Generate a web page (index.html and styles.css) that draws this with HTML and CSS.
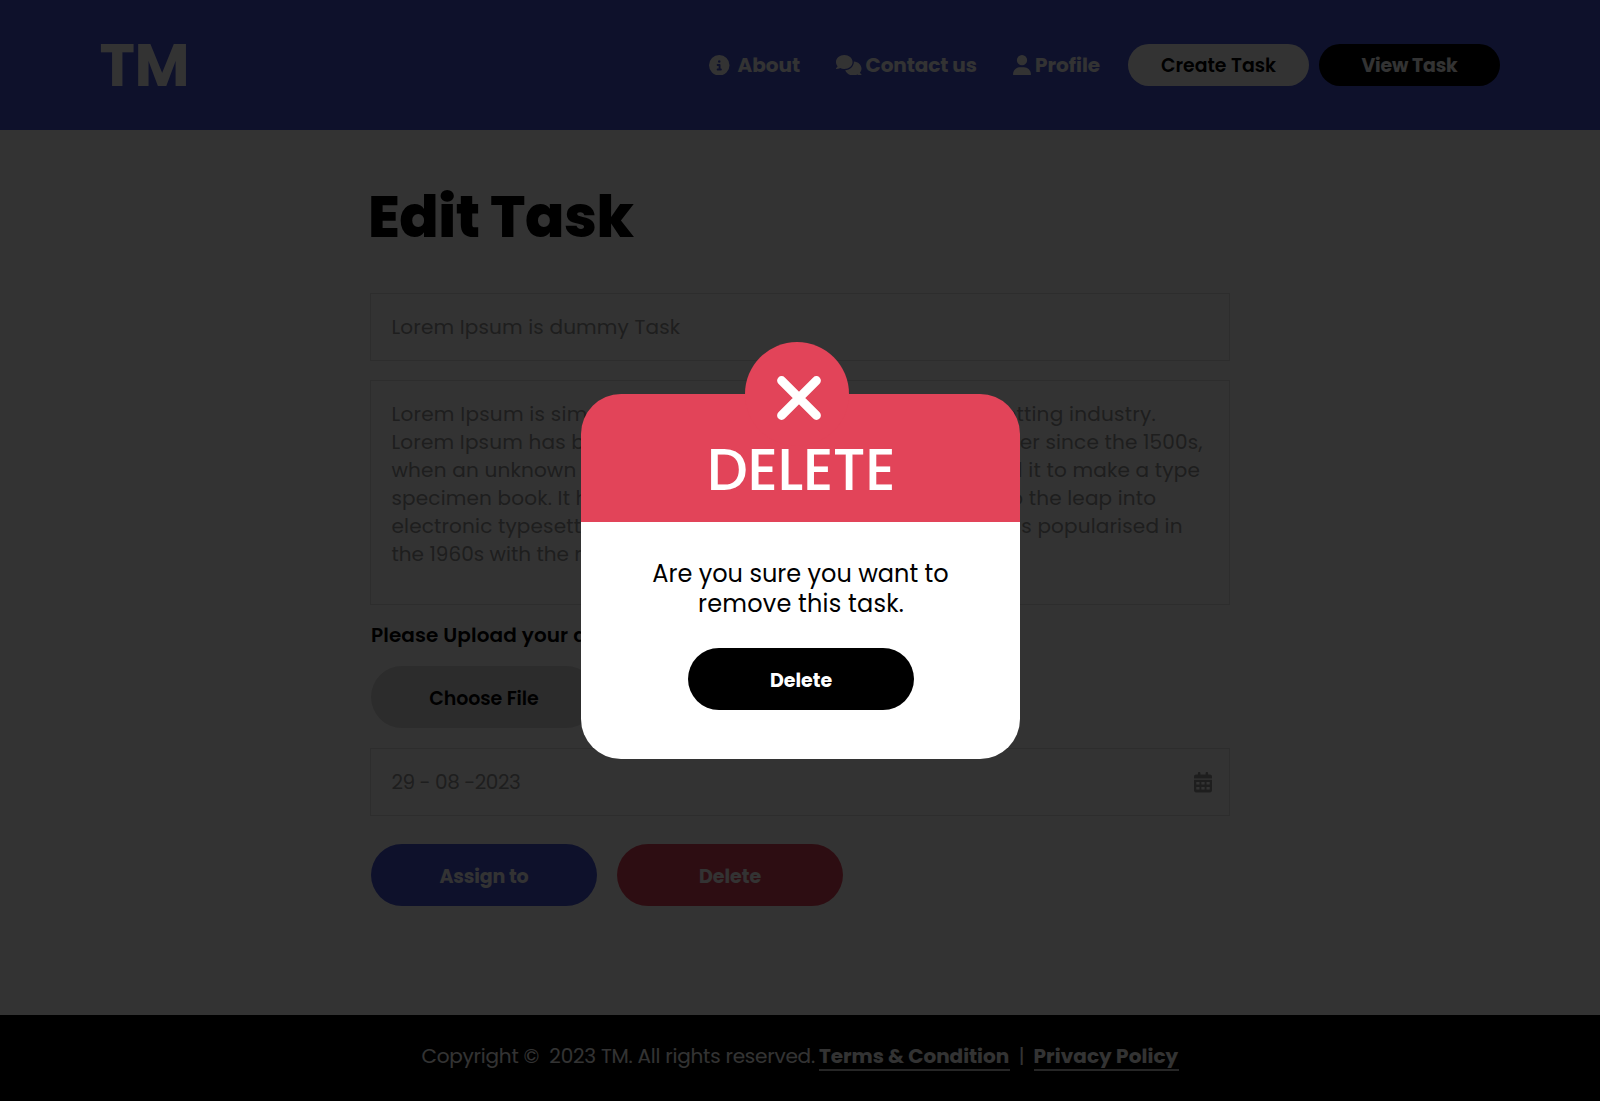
FILE: index.html
```
<!DOCTYPE html>
<html lang="en">
<head>
<meta charset="utf-8">
<title>Edit Task</title>
<link rel="stylesheet" href="styles.css">
</head>
<body>
<header class="topbar">
  <div class="logo">TM</div>
  <nav class="nav">
    <a class="nav-link about">
      <svg class="ico" width="20.5" height="20.5" viewBox="0 0 512 512"><path fill="currentColor" d="M256 512A256 256 0 1 0 256 0a256 256 0 1 0 0 512zM216 336h24V272H216c-13.300 0-24-10.700-24-24s10.700-24 24-24h48c13.300 0 24 10.700 24 24v88h8c13.300 0 24 10.700 24 24s-10.700 24-24 24H216c-13.300 0-24-10.700-24-24s10.700-24 24-24zm40-208a32 32 0 1 1 0 64 32 32 0 1 1 0-64z"/></svg>
      <span>About</span>
    </a>
    <a class="nav-link contact">
      <svg class="ico" width="25.500" height="20.500" viewBox="0 0 640 512"><path fill="currentColor" d="M208 352c114.900 0 208-78.800 208-176S322.900 0 208 0S0 78.800 0 176c0 38.600 14.700 74.300 39.600 103.400c-3.500 9.400-8.700 17.700-14.200 24.700c-4.800 6.200-9.700 11-13.300 14.300c-1.800 1.600-3.300 2.900-4.300 3.700c-.5 .4-.9 .7-1.100 .8l-.2 .2C1 327.200-1.400 334.400 .8 340.900S9.100 352 16 352c21.800 0 43.800-5.600 62.100-12.500c9.200-3.500 17.800-7.400 25.200-11.400C134.100 343.300 169.800 352 208 352zM448 176c0 112.300-99.100 196.900-216.500 207C255.800 457.400 336.400 512 432 512c38.200 0 73.900-8.700 104.700-23.900c7.500 4 16 7.900 25.200 11.400c18.300 6.900 40.300 12.500 62.100 12.500c6.900 0 13.100-4.500 15.200-11.100c2.100-6.600-.2-13.800-5.800-17.900l-.2-.2c-.2-.2-.6-.4-1.100-.8c-1-.8-2.500-2-4.300-3.700c-3.600-3.300-8.500-8.100-13.300-14.300c-5.500-7-10.700-15.400-14.200-24.700c24.900-29 39.600-64.700 39.600-103.400c0-92.800-84.900-168.900-192.600-175.500c.4 5.100 .6 10.300 .6 15.500z"/></svg>
      <span>Contact us</span>
    </a>
    <a class="nav-link profile">
      <svg class="ico" width="18" height="20.500" viewBox="0 0 448 512"><path fill="currentColor" d="M224 256A128 128 0 1 0 224 0a128 128 0 1 0 0 256zm-45.700 48C79.800 304 0 383.800 0 482.300C0 498.700 13.300 512 29.700 512H418.300c16.400 0 29.700-13.300 29.700-29.700C448 383.800 368.200 304 269.700 304H178.300z"/></svg>
      <span>Profile</span>
    </a>
    <a class="pill pill-light">Create Task</a>
    <a class="pill pill-dark">View Task</a>
  </nav>
</header>

<main class="page">
  <h1 class="title">Edit Task</h1>
  <div class="field name">Lorem Ipsum is dummy Task</div>
  <div class="field description">
    <p class="l1">Lorem Ipsum is simply dummy text of the printing and typesetting industry.</p>
    <p class="l2">Lorem Ipsum has been the industry's standard dummy text ever since the 1500s,</p>
    <p class="l3">when an unknown printer took a galley of type and scrambled it to make a type</p>
    <p class="l4">specimen book. It has survived not only five centuries, but also the leap into</p>
    <p class="l5">electronic typesetting, remaining essentially unchanged. It was popularised in</p>
    <p class="l6">the 1960s with the release of Letraset sheets.</p>
  </div>
  <div class="label">Please Upload your document</div>
  <button class="btn btn-file">Choose File</button>
  <div class="field date">
    <span>29 - 08 -2023</span>
    <svg width="18" height="20.500" viewBox="0 0 448 512"><path fill="currentColor" fill-rule="evenodd" d="M128 0c17.700 0 32 14.300 32 32V64H288V32c0-17.700 14.300-32 32-32s32 14.300 32 32V64h48c26.500 0 48 21.500 48 48v48H0V112C0 85.500 21.500 64 48 64H96V32c0-17.700 14.300-32 32-32zM0 192H448V464c0 26.500-21.500 48-48 48H48c-26.500 0-48-21.500-48-48V192zm56 56v64h80v-64zm128 0v64h80v-64zm128 0v64h80v-64zM56 376v64h80v-64zm128 0v64h80v-64zm128 0v64h80v-64z"/></svg>
  </div>
  <div class="actions">
    <button class="btn btn-assign">Assign to</button>
    <button class="btn btn-delete">Delete</button>
  </div>
</main>

<footer class="footer">
  <span class="copy">Copyright ©&nbsp; 2023 TM. All rights reserved.</span>
  <a class="terms">Terms &amp; Condition</a>
  <span class="bar">|</span>
  <a class="privacy">Privacy Policy</a>
</footer>

<div class="overlay">
  <section class="modal">
    <div class="modal-badge"></div>
    <div class="modal-head">
      <svg class="cross" width="44" height="44" viewBox="0 0 44 44"><path d="M4.600 4.600 39.400 39.400M39.400 4.600 4.600 39.400" fill="none" stroke="#fff" stroke-width="9" stroke-linecap="round"/></svg>
      <h2>DELETE</h2>
    </div>
    <p class="ask"><span class="a1">Are you sure you want to</span><br><span class="a2">remove this task.</span></p>
    <button class="btn btn-confirm">Delete</button>
  </section>
</div>
</body>
</html>
```
FILE: styles.css
```
* { box-sizing: border-box; }
body {
  margin: 0;
  background: #fff;
  color: #000;
  font-family: Poppins, Inter, sans-serif;
  font-size: 20px;
}
h1, h2, p { margin: 0; }
svg { flex: none; }

.topbar {
  height: 130px;
  padding: 0 100px 0 99.500px;
  display: flex;
  align-items: center;
  justify-content: space-between;
  background: #4655d7;
  color: #fff;
}
.logo { font-size: 60px; line-height: 60px; font-weight: 700; letter-spacing: -.5px; }
.nav { display: flex; align-items: center; font-weight: 700; white-space: nowrap; }
.nav-link { display: flex; align-items: center; }
.about { width: 92px; margin-right: 35px; gap: 8px; }
.contact { width: 142px; margin-right: 35px; gap: 4px; letter-spacing: -.1px; }
.profile { width: 88px; margin-right: 27px; gap: 4px; }
.pill {
  width: 181px;
  height: 42px;
  border-radius: 21px;
  display: flex;
  align-items: center;
  justify-content: center;
  font-size: 18.900px;
  font-weight: 600;
}
.pill-light { background: #fff; color: #000; }
.pill-dark { background: #000; color: #fff; margin-left: 10px; font-weight: 700; letter-spacing: -.15px; }

.page { width: 860px; height: 885px; margin: 0 auto; padding-top: 57px; }
.title { margin: 0 0 46px -2px; font-size: 58px; line-height: 60px; font-weight: 800; letter-spacing: -.45px; }
.field { border: 1px solid #dedede; color: #959595; padding: 0 20px 0 20.500px; white-space: nowrap; }
.name { height: 68px; line-height: 66px; letter-spacing: .16px; }
.description { height: 225px; margin-top: 19px; padding-top: 19px; line-height: 28px; }
.l1 { letter-spacing: .25px; }
.l2 { letter-spacing: .18px; }
.l3 { letter-spacing: .19px; }
.l4, .l5 { letter-spacing: .17px; }
.l6 { letter-spacing: .02px; }
.label { margin: 18px 0 19px 1px; line-height: 24px; font-weight: 600; letter-spacing: .1px; }

.btn {
  display: flex;
  align-items: center;
  justify-content: center;
  width: 226px;
  height: 62px;
  padding: 2px 0 0;
  border: 0;
  border-radius: 31px;
  font: 700 19px Poppins, Inter, sans-serif;
  color: #fff;
}
.btn-file { margin-left: 1px; background: #dadada; color: #000; font-weight: 600; letter-spacing: -.1px; }
.date { display: flex; align-items: center; justify-content: space-between; height: 68px; margin-top: 20px; padding-right: 17px; letter-spacing: -.45px; }
.date svg { margin-top: 1px; }
.actions { display: flex; gap: 20px; margin: 28px 0 0 1px; }
.btn-assign { background: #4655d7; letter-spacing: -.15px; }
.btn-delete { background: #e24459; }

.footer {
  height: 86px;
  padding: 29px 0 0 421.500px;
  display: flex;
  align-items: flex-start;
  background: #000;
  color: #fff;
  line-height: 24px;
  white-space: nowrap;
}
.copy { width: 397.500px; letter-spacing: -.23px; }
.terms, .privacy { padding-bottom: 1px; border-bottom: 2px solid rgba(255, 255, 255, .75); font-weight: 700; }
.terms { width: 191px; letter-spacing: -.03px; }
.bar { width: 23.500px; text-align: center; }
.privacy { width: 145px; letter-spacing: .07px; }

.overlay {
  position: fixed;
  inset: 0;
  display: flex;
  align-items: flex-start;
  justify-content: center;
  padding: 394px 0 0 1px;
  background: rgba(0, 0, 0, .8);
}
.modal {
  position: relative;
  width: 439px;
  height: 365px;
  border-radius: 40px;
  background: linear-gradient(#e24459 128px, #fff 128px);
}
.modal-badge { position: absolute; left: 163.500px; top: -51.700px; width: 104px; height: 104px; border-radius: 50%; background: #e24459; }
.modal-head { position: relative; height: 128px; padding: 46px 0 0 1px; color: #fff; }
.modal-head h2 { font-size: 58px; line-height: 60px; font-weight: 500; letter-spacing: -.4px; text-align: center; }
.cross { position: absolute; left: 196px; top: -18px; }
.ask { margin: 37px 0 29px; font-size: 24px; line-height: 30px; text-align: center; }
.a2 { margin-left: 1px; letter-spacing: .2px; }
.btn-confirm { margin-left: 107px; background: #000; }
```
